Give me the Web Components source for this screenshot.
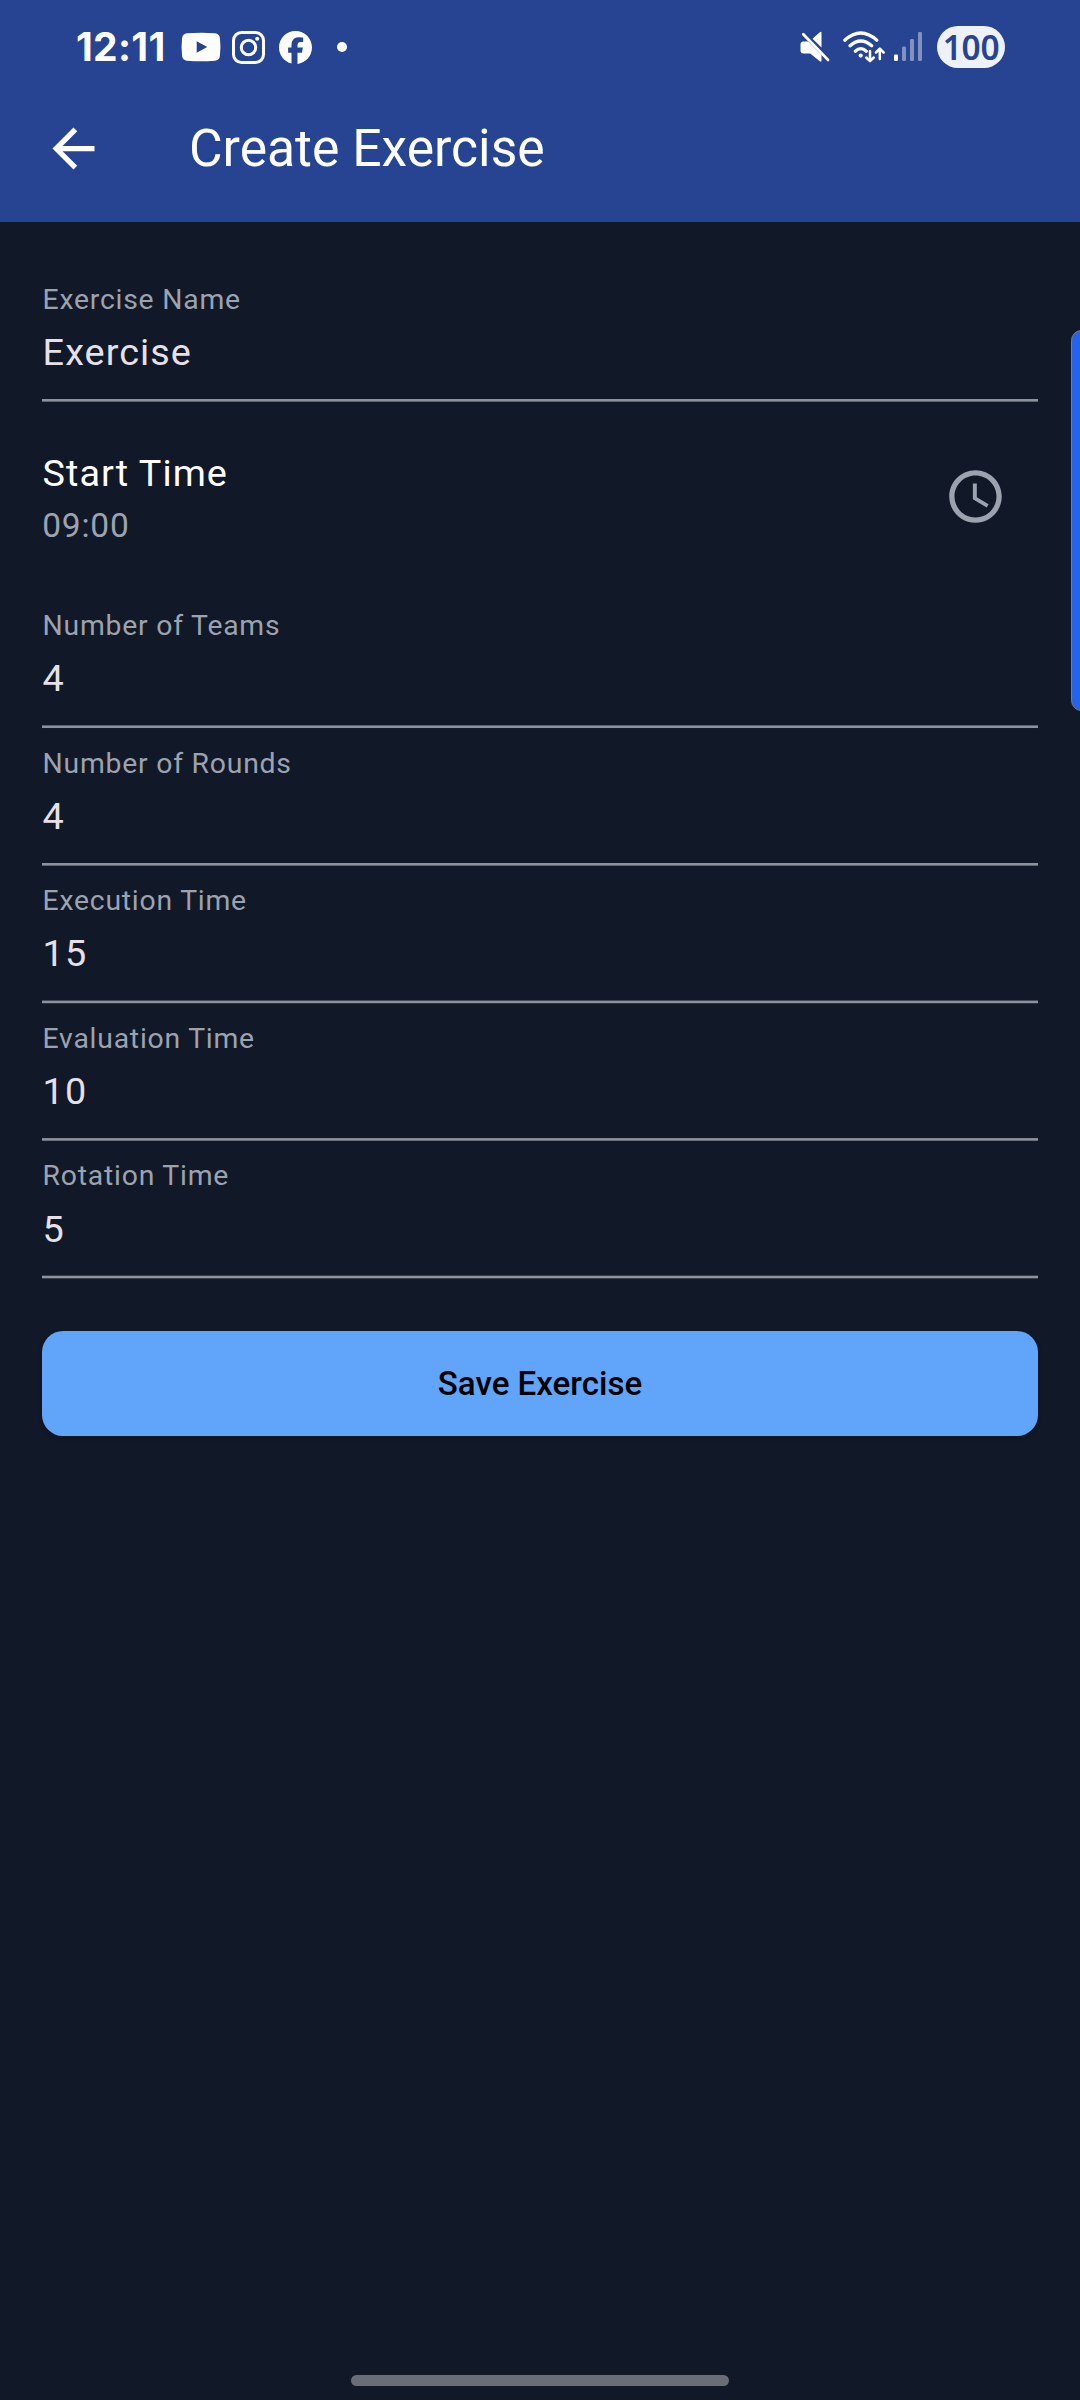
<!DOCTYPE html>
<html lang="en">
<head>
<meta charset="utf-8">
<title>Create Exercise</title>
<style>
html, body { margin: 0; padding: 0; background: #111827; }
body { width: 1080px; height: 2400px; overflow: hidden; font-family: Roboto, "Liberation Sans", sans-serif; }
</style>
</head>
<body>
<exercise-screen>
  <status-bar slot="top" time="12:11" battery="100"></status-bar>
  <app-header slot="top">Create Exercise</app-header>
  <text-field label="Exercise Name" y="1">Exercise</text-field>
  <time-tile label="Start Time">09:00</time-tile>
  <text-field label="Number of Teams" y="1.4">4</text-field>
  <text-field label="Number of Rounds" y="1">4</text-field>
  <text-field class="short" label="Execution Time" y="1.6">15</text-field>
  <text-field label="Evaluation Time" y="1.1">10</text-field>
  <text-field class="short" style="--gap:13px" label="Rotation Time" y="1.7">5</text-field>
  <primary-button>Save Exercise</primary-button>
  <edge-handle slot="overlay"></edge-handle>
  <gesture-bar slot="bottom"></gesture-bar>
</exercise-screen>
<script>
const define = (name, html) => customElements.define(name, class extends HTMLElement {
  connectedCallback() {
    if (this.shadowRoot) return;
    const t = document.createElement('template');
    t.innerHTML = typeof html === 'function' ? html(this) : html;
    this.attachShadow({ mode: 'open' }).append(t.content.cloneNode(true));
  }
});

define('exercise-screen', `
<style>
:host { display: flex; flex-direction: column; position: relative; width: 1080px; height: 2400px; background: #111827; overflow: hidden; }
header { background: #264491; height: 222px; flex: none; }
main { flex: 1; display: flex; flex-direction: column; padding: 43px 42px 0; }
</style>
<header><slot name="top"></slot></header>
<main><slot></slot></main>
<slot name="bottom"></slot>
<slot name="overlay"></slot>`);

define('status-bar', el => `
<style>
:host { display: flex; justify-content: space-between; height: 94px; padding: 0 75px 0 76px; box-sizing: border-box; color: #fff; }
div { display: flex; align-items: center; }
svg { display: block; flex: none; }
.time { font: 700 39px/94px Inter, sans-serif; width: 105px; white-space: nowrap; letter-spacing: .3px; }
.pill { width: 68px; height: 42px; border-radius: 21px; background: #eff1f9; color: #264491; justify-content: center; font: 650 33.500px/42px "Noto Sans", sans-serif; margin-left: 15px; letter-spacing: -.3px; }
</style>
<div>
  <span class="time">${el.getAttribute('time')}</span>
  <div class="icons">
    <svg width="40" height="30" viewBox="0 0 40 30"><path fill="#fff" fill-rule="evenodd" d="M6 1.300Q20 .1 34 1.300Q38.300 1.700 38.900 6Q40 15 38.900 24Q38.300 28.300 34 28.700Q20 29.900 6 28.700Q1.700 28.300 1.100 24Q0 15 1.100 6Q1.700 1.700 6 1.300ZM15.700 9.200V20.800L26.300 15Z"/></svg>
    <svg style="margin-left:11px" width="33" height="33" viewBox="0 0 33 33" fill="none" stroke="#fff" stroke-width="3"><rect x="1.500" y="1.500" width="30" height="30" rx="8"/><circle cx="16.500" cy="16.500" r="7.200"/><circle cx="25.200" cy="7.800" r="2" fill="#fff" stroke="none"/></svg>
    <svg style="margin-left:14px" width="33" height="33" viewBox="0 0 24 24"><path fill="#fff" d="M24 12.070C24 5.440 18.630.070 12 .070S0 5.440 0 12.070c0 5.630 3.870 10.350 9.100 11.650v-7.980H6.630v-3.670H9.100v-1.580c0-4.080 1.850-5.980 5.860-5.980.76 0 2.070.15 2.610.3v3.320c-.28-.03-.78-.05-1.390-.05-1.970 0-2.730.75-2.730 2.690v1.300h3.920l-.67 3.670h-3.250v8.250C19.400 23.270 24 18.210 24 12.070z"/></svg>
    <svg style="margin-left:25px" width="10" height="10"><circle cx="5" cy="5" r="5" fill="#fff"/></svg>
  </div>
</div>
<div>
  <svg width="31" height="32" viewBox="0 0 31 32"><path fill="#fff" d="M3.500 10.500H8L21.500 24V29.500Q21.500 31.500 19.800 30.300L10.200 22.500H3.500Q.5 22.500.5 19.500V13.500Q.5 10.500 3.500 10.500ZM12.500 7.800L19.800 1.300Q21.500 0 21.500 2.200V16.500Z"/><path d="M3.300 3.200L28 28.900" stroke="#fff" stroke-width="2.800" stroke-linecap="round"/></svg>
  <svg style="margin-left:12px" width="42" height="32" viewBox="0 0 42 32" fill="none" stroke="#fff" stroke-width="3" stroke-linecap="round" stroke-linejoin="round"><path d="M1.800 9.200Q17.800-5.200 33.800 9.200M7 14.800Q17.800 5.200 28.700 14.800M12.300 20.200Q17.800 15.200 23.300 20.200" stroke-width="3.200"/><circle cx="17.700" cy="24.600" r="2.100" fill="#fff" stroke="none"/><path stroke-width="2.500" d="M27 20V29.500M23.200 26.500L27 30.200L30.800 26.500M36.800 28V18.500M33 21.500L36.800 17.700L40.600 21.500"/></svg>
  <svg style="margin-left:9px" width="28" height="30" viewBox="0 0 28 30" fill="#fff"><rect x="0" y="22.500" width="4" height="6.500" rx="1.200"/><g opacity=".42"><rect x="8" y="14.500" width="4" height="14.500" rx="1.200"/><rect x="16" y="7" width="4" height="22" rx="1.200"/><rect x="24" y="0" width="4" height="29" rx="1.200"/></g></svg>
  <div class="pill">${el.getAttribute('battery')}</div>
</div>`);

define('app-header', `
<style>
:host { display: flex; height: 108px; align-items: center; color: #fff; padding-left: 42px; }
svg { display: block; flex: none; width: 63px; height: 63px; }
h1 { margin: 2px 0 0 84px; font: 400 51.650px/62px Roboto, sans-serif; white-space: nowrap; }
</style>
<svg viewBox="0 0 24 24" fill="#fff"><path d="M20 11H7.830l5.590-5.590L12 4l-8 8 8 8 1.410-1.410L7.830 13H20z"/></svg>
<h1><slot></slot></h1>`);

define('text-field', el => `
<style>
:host { display: flex; flex-direction: column; flex: none; height: 138px; --lift: 0px; }
:host(.short) { height: 137px; --lift: 1px; }
label { margin: calc(18px - var(--lift)) 0 0 .6px; font-size: 28.350px; line-height: 34px; letter-spacing: .77px; color: #9ca3af; white-space: nowrap; }
.value { margin: var(--gap, 12px) 0 0 .6px; font-size: 37.800px; line-height: 46px; letter-spacing: 1.050px; color: #e6e0e9; white-space: nowrap; }
svg { display: block; margin-top: auto; width: 100%; height: 5px; }
</style>
<label>${el.getAttribute('label')}</label>
<div class="value"><slot></slot></div>
<svg><rect width="100%" height="2.625" y="${el.getAttribute('y')}" fill="#8d929c"/></svg>`);

define('time-tile', el => `
<style>
:host { display: flex; flex: none; height: 188px; justify-content: space-between; }
.title { margin: 47px 0 0 .6px; font-size: 37.800px; line-height: 46px; letter-spacing: 1.030px; color: #fff; }
.sub { margin: 10px 0 0 .2px; font-size: 33.500px; line-height: 40px; letter-spacing: .8px; color: #9ca3af; }
svg { display: block; width: 63px; height: 63px; margin: 61.750px 31.500px 0 0; }
</style>
<div><div class="title">${el.getAttribute('label')}</div><div class="sub"><slot></slot></div></div>
<svg viewBox="0 0 24 24" fill="#9ca3af"><path d="M11.990 2C6.470 2 2 6.480 2 12s4.470 10 9.990 10C17.520 22 22 17.520 22 12S17.520 2 11.990 2zM12 20c-4.420 0-8-3.580-8-8s3.580-8 8-8 8 3.580 8 8-3.580 8-8 8zm.5-13H11v6l5.250 3.150.75-1.230-4.500-2.670z"/></svg>`);

define('primary-button', `
<style>
:host { display: block; flex: none; margin-top: 52px; }
button { display: block; width: 100%; height: 105px; border: 0; padding: 0; border-radius: 21px; background: #60a5fa; color: #000; font: 500 33.080px/105px Roboto, sans-serif; letter-spacing: 0; box-shadow: 0 2px 4px rgba(0,0,0,.25); }
</style>
<button><slot></slot></button>`);

define('edge-handle', `
<style>
:host { position: absolute; right: -12px; top: 330px; width: 21px; height: 381px; box-sizing: border-box; border: 1.500px solid #7b7d80; border-radius: 11px; background: #2563eb; }
</style>`);

define('gesture-bar', `
<style>
:host { display: block; flex: none; align-self: center; width: 378px; height: 11px; border-radius: 5.500px; margin-bottom: 14px; background: #6a6d76; }
</style>`);
</script>
</body>
</html>
